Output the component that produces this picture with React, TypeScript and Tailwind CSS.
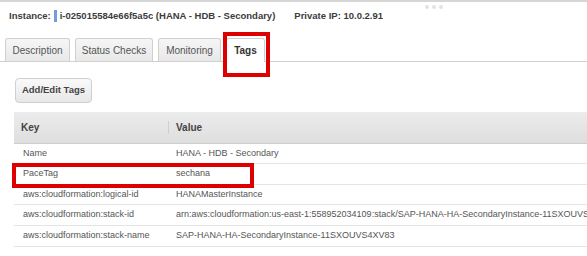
import React from "react";

const tabs = [
  { label: "Description", w: "w-[65px]" },
  { label: "Status Checks", w: "w-[78px]" },
  { label: "Monitoring", w: "w-[63px]" },
];

const rows = [
  { k: "Name", v: "HANA - HDB - Secondary", h: "h-[20px]" },
  { k: "PaceTag", v: "sechana", h: "h-[21px]" },
  { k: "aws:cloudformation:logical-id", v: "HANAMasterInstance", h: "h-[20px]" },
  {
    k: "aws:cloudformation:stack-id",
    v: "arn:aws:cloudformation:us-east-1:558952034109:stack/SAP-HANA-HA-SecondaryInstance-11SXOUVS4",
    h: "h-[21px]",
  },
  { k: "aws:cloudformation:stack-name", v: "SAP-HANA-HA-SecondaryInstance-11SXOUVS4XV83", h: "h-[21px]" },
];

export default function App() {
  return (
    <div
      className="relative w-[587px] h-[256px] overflow-hidden bg-white border-t-2 border-[#d6d6d6] text-[#444]"
      style={{ fontFamily: '"Liberation Sans", Arial, sans-serif' }}
    >
      {/* drag handle */}
      <div className="absolute top-[3px] left-[425px] flex gap-[3px]">
        <span className="w-[4px] h-[4px] rounded-full bg-[#e2e2e2]" />
        <span className="w-[4px] h-[4px] rounded-full bg-[#e2e2e2]" />
        <span className="w-[4px] h-[4px] rounded-full bg-[#e2e2e2]" />
      </div>

      {/* instance header */}
      <div className="flex items-center h-[14px] mt-[7px] pl-[9px] text-[9.5px] font-bold text-[#3c3c3c] whitespace-nowrap">
        <span>Instance:</span>
        <span className="ml-[3px] w-[3px] h-[12px] bg-[#6f9fd8]" />
        <span className="ml-[3px]">i-025015584e66f5a5c (HANA - HDB - Secondary)</span>
        <span className="ml-[19px]">Private IP: 10.0.2.91</span>
      </div>

      {/* tabs */}
      <div className="flex items-end gap-[5px] mt-[15px] pl-[5px] border-b border-[#d0d0d0] h-[24px]">
        {tabs.map((t) => (
          <div
            key={t.label}
            className={`${t.w} h-[23px] flex items-center justify-center border border-b-0 border-[#d0d0d0] rounded-t-[3px] bg-gradient-to-b from-[#f6f6f6] to-[#e8e8e8] text-[10px] text-[#555]`}
          >
            {t.label}
          </div>
        ))}
        <div className="w-[39px] h-[24px] -mb-px flex items-center justify-center border border-b-0 border-[#d0d0d0] rounded-t-[3px] bg-white text-[10px] font-bold text-[#333]">
          Tags
        </div>
      </div>

      {/* button */}
      <button className="ml-[15px] mt-[16px] w-[77px] h-[25px] rounded-[4px] border border-[#cfcfcf] bg-gradient-to-b from-[#fafafa] to-[#e7e7e7] text-[9.5px] font-bold text-[#444] flex items-center justify-center">
        Add/Edit Tags
      </button>

      {/* table */}
      <div className="ml-[14px] mt-[9px]">
        <div className="flex items-center h-[32px] bg-gradient-to-b from-[#ececec] to-[#dedede] border-b border-[#cdcdcd] text-[10px] font-bold text-[#444]">
          <div className="w-[154px] shrink-0 pl-[7px]">Key</div>
          <div className="w-px h-[13px] bg-[#cfcfcf]" />
          <div className="pl-[7px]">Value</div>
        </div>
        {rows.map((r) => (
          <div
            key={r.k}
            className={`flex items-center ${r.h} border-b border-[#e4e4e4] text-[9px] text-[#555] whitespace-nowrap`}
          >
            <div className="w-[154px] shrink-0 pl-[9px]">{r.k}</div>
            <div className="pl-[8px] min-w-0">{r.v}</div>
          </div>
        ))}
      </div>

      {/* highlight boxes */}
      <div className="absolute left-[223px] top-[30px] w-[47px] h-[45px] border-4 border-[#dc0000]" />
      <div className="absolute left-[12px] top-[161px] w-[242px] h-[25px] border-4 border-[#dc0000]" />
    </div>
  );
}
